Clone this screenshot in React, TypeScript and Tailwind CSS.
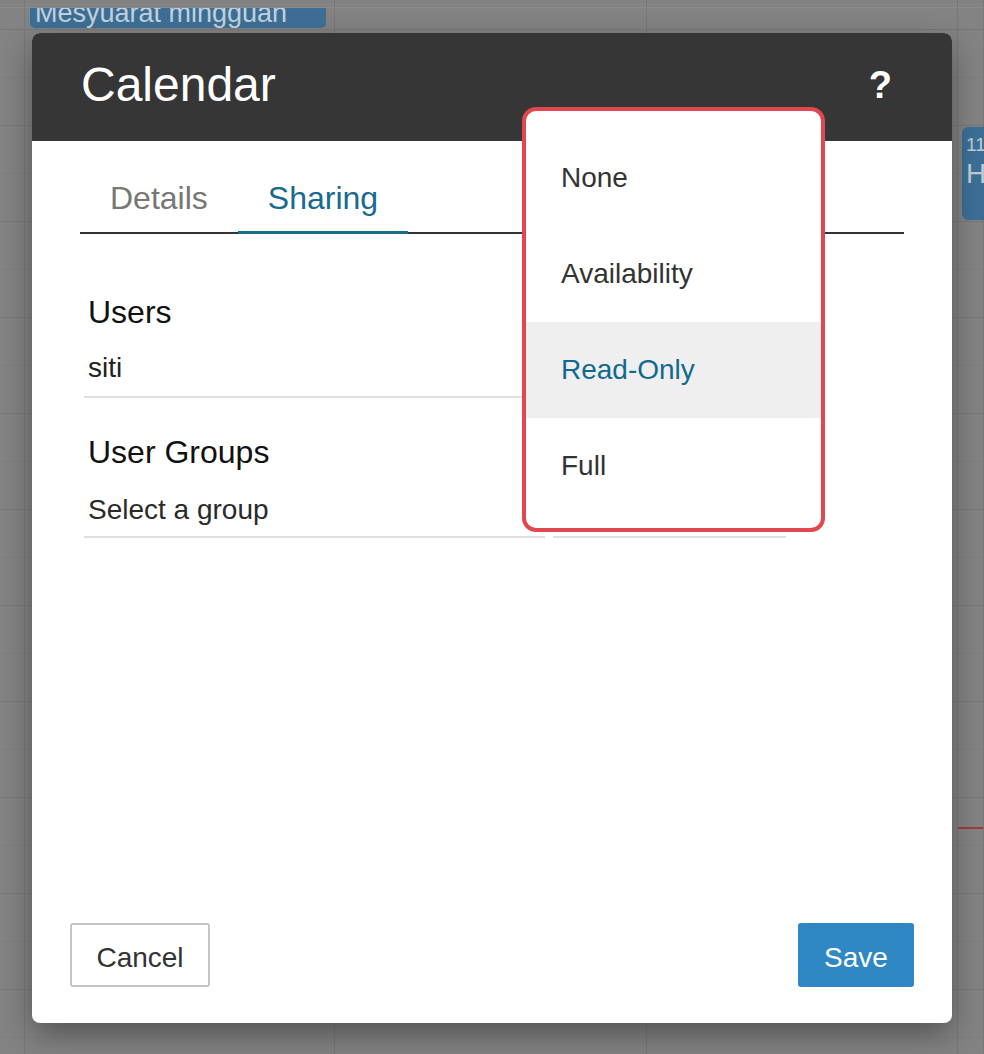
import { useState } from "react";

const font = { fontFamily: '"Liberation Sans", Arial, sans-serif' };

const rows = Array.from({ length: 21 }, (_, i) => i);
const columns = ["w-[25px]", "w-[310px]", "w-[312px]", "w-[311px]", "flex-1"];

function CalendarBackdrop() {
  return (
    <div className="absolute inset-0 flex bg-[#838383]">
      {columns.map((w, c) => (
        <div key={c} className={`relative ${w} border-r border-[#787878]`}>
          <div className="h-[8px] border-b border-[#8c8c8c]" />
          <div className="h-[22px] border-b border-[#787878]" />
          {rows.map((r) => (
            <div
              key={r}
              className={
                r % 2 === 0
                  ? "h-[48px] border-b border-dotted border-[#7b7b7b]"
                  : "h-[48px] border-b border-[#787878]"
              }
            />
          ))}
          {c === 1 && (
            <div className="absolute left-[5px] top-[8px] h-[20px] w-[296px] overflow-hidden rounded-b-[5px] bg-[#3d6f96] pl-[5px]">
              <div className="-mt-[6px] text-[27px] leading-[22px] text-[#c2d1dc]">Mesyuarat mingguan</div>
            </div>
          )}
          {c === 4 && (
            <>
              <div className="absolute left-[4px] top-[127px] h-[93px] w-[40px] rounded-l-[6px] bg-[#3d6f96] pl-[4px] pt-[6px] text-[#c2ccd4]">
                <div className="text-[19px] leading-[24px]">11</div>
                <div className="text-[28px] leading-[34px]">H</div>
              </div>
              <div className="absolute left-0 right-0 top-[827px] h-[2px] bg-[#a43a3a]" />
            </>
          )}
        </div>
      ))}
    </div>
  );
}

function PermissionMenu() {
  const options = ["None", "Availability", "Read-Only", "Full"];
  return (
    <div className="absolute -left-[31px] -top-[233px] z-10 w-[303px] rounded-[14px] border-4 border-[#e0474f] bg-white pb-[14px] pt-[19px]">
      {options.map((o) => (
        <div
          key={o}
          className={
            o === "Read-Only"
              ? "flex h-[96px] items-center bg-[#efefef] pl-[35px] text-[28px] text-[#106a90]"
              : "flex h-[96px] items-center pl-[35px] text-[28px] text-[#333]"
          }
        >
          {o}
        </div>
      ))}
    </div>
  );
}

export default function App() {
  const [tab, setTab] = useState("Sharing");

  return (
    <div className="relative h-[1054px] w-full overflow-hidden" style={font}>
      <CalendarBackdrop />

      <div className="absolute inset-0 flex justify-center pt-[33px]">
        <div className="flex h-[990px] w-[920px] flex-col rounded-[8px] bg-white shadow-[0_12px_30px_rgba(0,0,0,0.35)]">
          <header className="flex h-[108px] items-center justify-between rounded-t-[8px] bg-[#363636] pb-[5px] pl-[49px] pr-[60px]">
            <h1 className="text-[48px] leading-none text-white">Calendar</h1>
            <span className="text-[38px] font-bold leading-none text-white">?</span>
          </header>

          <div className="flex-1 px-[48px] pt-[22px]">
            <div className="flex border-b-2 border-[#333]">
              {["Details", "Sharing"].map((t) => (
                <button
                  key={t}
                  onClick={() => setTab(t)}
                  className={
                    tab === t
                      ? "-mb-[2px] flex h-[71px] items-center border-b-[3px] border-[#186a8e] px-[30px] pt-[2px] text-[32px] text-[#186a8e]"
                      : "-mb-[2px] flex h-[71px] items-center border-b-[3px] border-transparent px-[30px] pt-[2px] text-[32px] text-[#777]"
                  }
                >
                  {t}
                </button>
              ))}
            </div>

            <div className="mt-[58px] px-[4px]">
              <div className="pl-[4px] text-[32px] leading-10 text-[#111]">Users</div>
              <div className="mt-2 flex gap-2">
                <div className="flex h-[58px] w-[461px] items-center border-b-2 border-[#e0e0e0] pl-[4px] text-[28px] text-[#222]">
                  siti
                </div>
                <div className="relative h-[58px] w-[233px] border-b-2 border-[#e0e0e0]">
                  <PermissionMenu />
                </div>
              </div>

              <div className="mt-[34px] pl-[4px] text-[32px] leading-10 text-[#111]">User Groups</div>
              <div className="mt-2 flex gap-2">
                <div className="flex h-[58px] w-[461px] items-center border-b-2 border-[#e0e0e0] pl-[4px] pt-[3px] text-[28px] text-[#2a2a2a]">
                  Select a group
                </div>
                <div className="h-[58px] w-[233px] border-b-2 border-[#e0e0e0]" />
              </div>
            </div>
          </div>

          <footer className="flex items-center justify-between px-[38px] pb-[36px]">
            <button className="h-[64px] w-[140px] rounded-[3px] border-2 border-[#c4c4c4] bg-white pt-[5px] text-[28px] text-[#333]">
              Cancel
            </button>
            <button className="h-[64px] w-[116px] rounded-[3px] bg-[#2f88c3] pt-[5px] text-[28px] text-white">
              Save
            </button>
          </footer>
        </div>
      </div>
    </div>
  );
}
